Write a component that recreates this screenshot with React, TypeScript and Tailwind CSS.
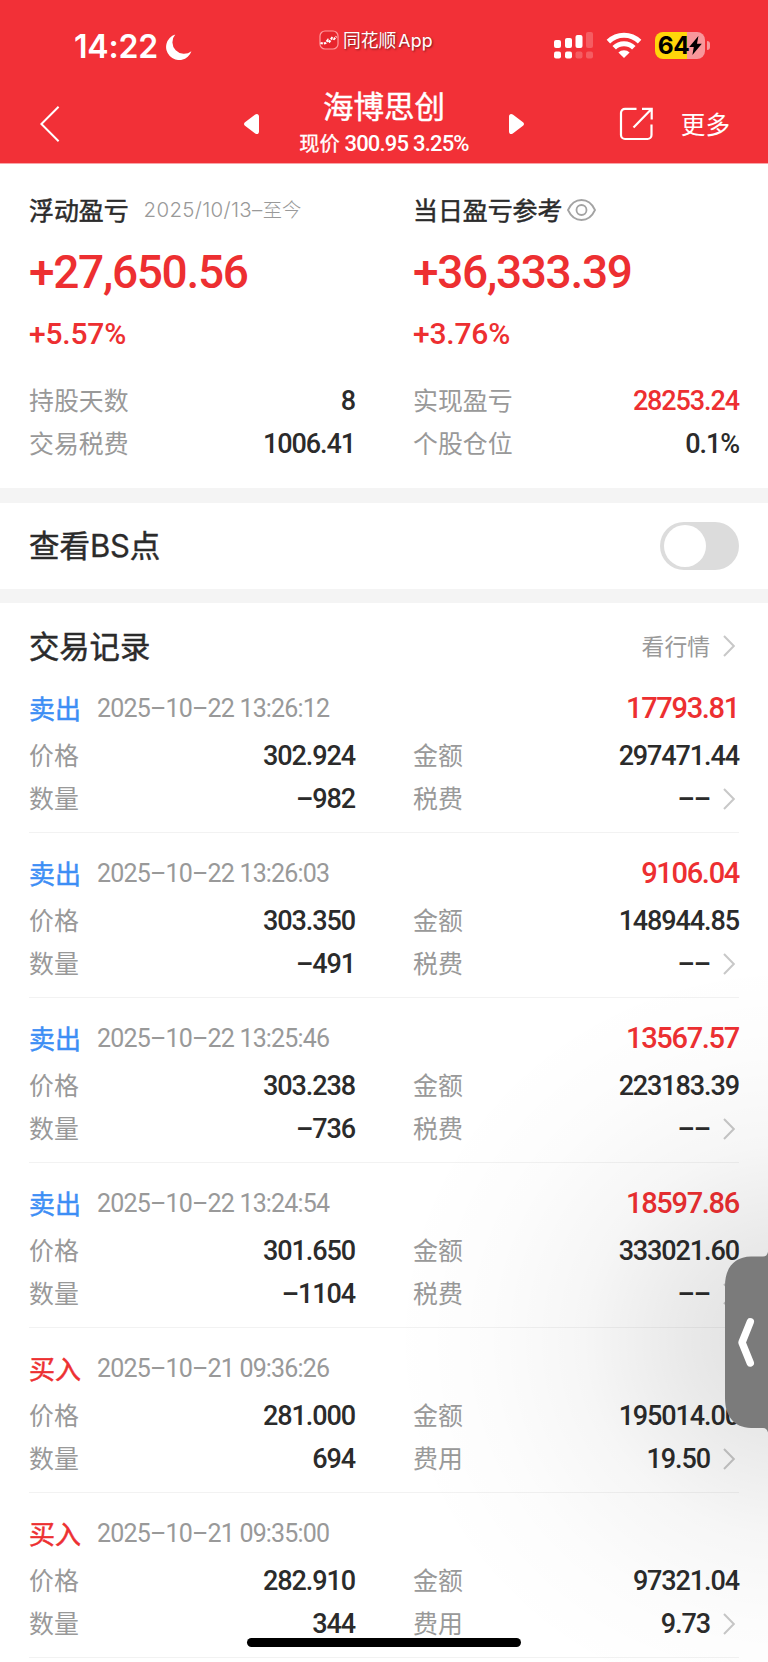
import type { ReactNode } from 'react';

type Trade = {
  side: 'sell' | 'buy';
  time: string;
  profit?: string;
  price: string;
  amount: string;
  quantity: string;
  feeLabel: string;
  fee: string;
};

const trades: Trade[] = [
  { side: 'sell', time: '2025–10–22 13:26:12', profit: '17793.81', price: '302.924', amount: '297471.44', quantity: '–982', feeLabel: '税费', fee: '––' },
  { side: 'sell', time: '2025–10–22 13:26:03', profit: '9106.04', price: '303.350', amount: '148944.85', quantity: '–491', feeLabel: '税费', fee: '––' },
  { side: 'sell', time: '2025–10–22 13:25:46', profit: '13567.57', price: '303.238', amount: '223183.39', quantity: '–736', feeLabel: '税费', fee: '––' },
  { side: 'sell', time: '2025–10–22 13:24:54', profit: '18597.86', price: '301.650', amount: '333021.60', quantity: '–1104', feeLabel: '税费', fee: '––' },
  { side: 'buy', time: '2025–10–21 09:36:26', price: '281.000', amount: '195014.00', quantity: '694', feeLabel: '费用', fee: '19.50' },
  { side: 'buy', time: '2025–10–21 09:35:00', price: '282.910', amount: '97321.04', quantity: '344', feeLabel: '费用', fee: '9.73' },
];

function Label({ children }: { children: ReactNode }) {
  return <span className="-mt-[3px] text-[24.9px] text-[#999]">{children}</span>;
}

function Value({ children, red }: { children: ReactNode; red?: boolean }) {
  return (
    <span className={`font-['Roboto'] text-[27px] font-medium tracking-[-1.1px] ${red ? 'text-[#ed2f31]' : 'text-[#2b2b2b]'}`}>
      {children}
    </span>
  );
}

function Chevron() {
  return (
    <svg className="ml-[13px] mr-[4px] h-[22px] w-[12px] shrink-0" viewBox="0 0 12 22" fill="none" stroke="#c8c8c8" strokeWidth="2">
      <path d="M1 1 10.8 11 1 21" />
    </svg>
  );
}

function StatusBar() {
  return (
    <div className="flex h-[76px] items-start justify-between pl-[74px] pr-[58px] text-white">
      <div className="flex items-center gap-[8px] pt-[27px]">
        <span className="font-['Inter'] text-[32px] font-semibold leading-[40px] tracking-[-0.2px]">14:22</span>
        <svg className="h-[26px] w-[26px]" viewBox="0 0 26 26" fill="currentColor">
          <path d="M9.3.6A13 13 0 1 0 25.4 17.2 11.6 11.6 0 0 1 9.3.6Z" />
        </svg>
      </div>
      <div className="flex items-center gap-[4px] pr-[14px] pt-[27px] pl-[20px]">
        <svg className="h-[20px] w-[20px]" viewBox="0 0 20 20" fill="none">
          <rect x="1" y="1" width="18" height="18" rx="5" fill="#e8252d" stroke="#ff9a9d" strokeWidth="1.2" />
          <path d="M1.5 13 4 13.5 6.5 13 9 10 10.5 11.5 13 8 15 9 17.5 6.5" stroke="#fff" strokeWidth="2.2" strokeDasharray="2.4 1" />
        </svg>
        <span className="text-[17.8px] leading-[24px] [text-shadow:1px_1px_2px_rgba(0,0,0,0.5)]">
          同花顺 <span className="-ml-[2px] font-['Inter'] tracking-[0.2px]">App</span>
        </span>
      </div>
      <div className="flex items-center pt-[31px]">
        <svg className="h-[28px] w-[40px]" viewBox="0 0 40 28" fill="currentColor">
          <rect x="0" y="9" width="7" height="8" rx="2" />
          <rect x="11" y="7" width="7" height="10" rx="2" />
          <rect x="21.5" y="4" width="7" height="13" rx="2" />
          <rect x="32" y="1" width="7" height="16" rx="2" opacity=".22" />
          <rect x="0" y="20.5" width="7" height="7" rx="2" />
          <rect x="11" y="20.5" width="7" height="7" rx="2" />
          <rect x="21.5" y="20.5" width="7" height="7" rx="2" opacity=".22" />
          <rect x="32" y="20.5" width="7" height="7" rx="2" opacity=".22" />
        </svg>
        <svg className="ml-[12px] h-[26px] w-[36px]" viewBox="0 0 36 26" fill="none" stroke="currentColor" strokeWidth="5">
          <path d="M2.4 9.6a22.3 22.3 0 0 1 31.2 0" />
          <path d="M8.2 15.8a14 14 0 0 1 19.6 0" />
          <path d="M18 26 12.4 20.6a7.8 7.8 0 0 1 11.2 0Z" fill="currentColor" stroke="none" />
        </svg>
        <div className="ml-[13px] flex h-[27px] w-[50px] items-center justify-center rounded-[8px] bg-[linear-gradient(90deg,#ffd60a_64%,#f8979b_64%)] text-black">
          <span className="font-['Inter'] text-[24.5px] font-bold leading-[27px] tracking-[-0.6px]">64</span>
          <svg className="h-[19px] w-[13px]" viewBox="0 0 13 19" fill="currentColor">
            <path d="M9.4 0 .2 11h4.6L3.4 19 12.8 7.8H8Z" />
          </svg>
        </div>
        <span className="ml-[2px] h-[9px] w-[3px] rounded-r-full bg-[#f8979b]" />
      </div>
    </div>
  );
}

function NavBar() {
  return (
    <div className="flex h-[87px] items-center pl-[40px] pr-[38px] text-white">
      <svg className="mt-[8px] h-[36px] w-[20px]" viewBox="0 0 20 36" fill="none" stroke="currentColor" strokeWidth="2">
        <path d="M18.6.8 1.4 18l17.2 17.2" />
      </svg>
      <svg className="ml-[184px] mt-[9px] h-[20px] w-[15px]" viewBox="0 0 15 20" fill="currentColor">
        <path d="M1 8.3 11.2.6C13 -.6 15 .2 15 2.6v14.8c0 2.4-2 3.2-3.8 2L1 11.7c-1.3-1-1.3-2.4 0-3.4Z" />
      </svg>
      <div className="mt-[6px] flex w-[250px] flex-col items-center">
        <h1 className="text-[30.5px] leading-[36px] [-webkit-text-stroke:0.4px_white]">海博思创</h1>
        <p className="mt-[5px] whitespace-pre text-[20.3px] leading-[28px]">
          <span className="[-webkit-text-stroke:0.3px_white]">现价</span>
          <span className="font-['Roboto'] text-[22px] font-medium tracking-[-0.8px]"> 300.95 3.25%</span>
        </p>
      </div>
      <svg className="mt-[9px] h-[20px] w-[15px] rotate-180" viewBox="0 0 15 20" fill="currentColor">
        <path d="M1 8.3 11.2.6C13 -.6 15 .2 15 2.6v14.8c0 2.4-2 3.2-3.8 2L1 11.7c-1.3-1-1.3-2.4 0-3.4Z" />
      </svg>
      <svg className="ml-auto mt-[9px] h-[34px] w-[34px]" viewBox="0 0 34 34" fill="none" stroke="currentColor" strokeWidth="2.2">
        <path d="M17.5 1.8H6a4 4 0 0 0-4 4V28a4 4 0 0 0 4 4h22.5a4 4 0 0 0 4-4V17.5" />
        <path d="M23 1.8h9.700V12.500M32 2.5 14.5 20.5" />
      </svg>
      <span className="ml-[28px] mt-[7px] text-[24.6px] leading-[36px]">更多</span>
    </div>
  );
}

type SummaryColumnProps = {
  heading: ReactNode;
  total: string;
  percent: string;
  rows: { label: string; value: string; red?: boolean }[];
};

function SummaryColumn({ heading, total, percent, rows }: SummaryColumnProps) {
  return (
    <div className="px-[29px] pt-[28px]">
      <div className="flex h-[36px] items-center">{heading}</div>
      <div className="mt-[14px] flex h-[60px] items-center font-['Roboto'] text-[46px] font-medium tracking-[-1.3px] text-[#ed2f31]">{total}</div>
      <div className="mt-[11px] flex h-[40px] items-center font-['Roboto'] text-[30px] font-medium tracking-[-0.2px] text-[#ed2f31]">{percent}</div>
      <div className="mt-[27px]">
        {rows.map((row) => (
          <div key={row.label} className="flex h-[43px] items-center justify-between">
            <Label>{row.label}</Label>
            <Value red={row.red}>{row.value}</Value>
          </div>
        ))}
      </div>
    </div>
  );
}

function Summary() {
  return (
    <section className="grid h-[324px] grid-cols-2 text-[#2b2b2b]">
      <SummaryColumn
        heading={
          <>
            <span className="text-[24.9px] [-webkit-text-stroke:0.5px_#2b2b2b]">浮动盈亏</span>
            <span className="ml-[15px] text-[19.3px] font-light text-[#999]">
              <span className="font-['Inter'] text-[20.5px] tracking-[0.3px]">2025/10/13–</span>至今
            </span>
          </>
        }
        total="+27,650.56"
        percent="+5.57%"
        rows={[
          { label: '持股天数', value: '8' },
          { label: '交易税费', value: '1006.41' },
        ]}
      />
      <SummaryColumn
        heading={
          <>
            <span className="text-[24.9px] [-webkit-text-stroke:0.5px_#2b2b2b]">当日盈亏参考</span>
            <svg className="ml-[5px] h-[22px] w-[29px]" viewBox="0 0 29 22" fill="none" stroke="#a3a3a3" strokeWidth="1.8">
              <path d="M1 11C4 4.5 9 1 14.5 1S25 4.5 28 11c-3 6.5-8 10-13.5 10S4 17.5 1 11Z" />
              <circle cx="14.5" cy="11" r="5" />
            </svg>
          </>
        }
        total="+36,333.39"
        percent="+3.76%"
        rows={[
          { label: '实现盈亏', value: '28253.24', red: true },
          { label: '个股仓位', value: '0.1%' },
        ]}
      />
    </section>
  );
}

function TradeRow({ trade }: { trade: Trade }) {
  const sell = trade.side === 'sell';
  return (
    <li className="mx-[29px] h-[165px] border-b border-[#f2f2f2] pt-[20px]">
      <div className="flex h-[42px] items-center">
        <span className={`-mt-[4px] text-[26px] ${sell ? 'text-[#3d8ef5] [-webkit-text-stroke:0.5px_#3d8ef5]' : 'text-[#ed2f31] [-webkit-text-stroke:0.5px_#ed2f31]'}`}>
          {sell ? '卖出' : '买入'}
        </span>
        <span className="ml-[16px] font-['Roboto'] text-[25px] tracking-[-0.82px] text-[#999]">{trade.time}</span>
        <span className="ml-auto font-['Roboto'] text-[29px] font-medium tracking-[-1.3px] text-[#ed2f31]">{trade.profit}</span>
      </div>
      <div className="mt-[5px] grid grid-cols-2 gap-x-[58px]">
        <div className="flex h-[43px] items-center justify-between">
          <Label>价格</Label>
          <Value>{trade.price}</Value>
        </div>
        <div className="flex h-[43px] items-center justify-between">
          <Label>金额</Label>
          <Value>{trade.amount}</Value>
        </div>
        <div className="flex h-[42px] items-center justify-between">
          <Label>数量</Label>
          <Value>{trade.quantity}</Value>
        </div>
        <div className="flex h-[42px] items-center">
          <Label>{trade.feeLabel}</Label>
          <span className="ml-auto">
            <Value>{trade.fee}</Value>
          </span>
          <Chevron />
        </div>
      </div>
    </li>
  );
}

export default function App() {
  return (
    <div className="relative h-[1662px] w-[768px] overflow-hidden bg-white font-['Noto_Sans_CJK_SC',sans-serif]">
      <header className="h-[164px] border-b border-[#f9a5a8] bg-[#f23037]">
        <StatusBar />
        <NavBar />
      </header>
      <Summary />
      <div className="h-[15px] bg-[#f4f4f4]" />
      <section className="flex h-[86px] items-center justify-between px-[29px]">
        <span className="text-[30.5px] text-[#2b2b2b] [-webkit-text-stroke:0.5px_#2b2b2b]">
          查看<span className="font-['Inter'] text-[31px] tracking-[-0.2px] [-webkit-text-stroke:0.3px_#2b2b2b]">BS</span>点
        </span>
        <div className="flex h-[48px] w-[79px] items-center rounded-full bg-[#dcdcdc] pl-[4px]">
          <div className="size-[42px] rounded-full bg-white" />
        </div>
      </section>
      <div className="h-[14px] bg-[#f4f4f4]" />
      <section>
        <div className="flex h-[65px] items-center px-[29px] pt-[21px]">
          <h2 className="-mt-[2px] text-[30.3px] leading-[44px] text-[#2b2b2b] [-webkit-text-stroke:0.5px_#2b2b2b]">交易记录</h2>
          <span className="ml-auto text-[22.8px] leading-[44px] text-[#999]">看行情</span>
          <Chevron />
        </div>
        <ul>
          {trades.map((trade) => (
            <TradeRow key={trade.time} trade={trade} />
          ))}
        </ul>
      </section>

      <div className="pointer-events-none absolute inset-0 bg-[radial-gradient(ellipse_400px_380px_at_790px_1340px,rgba(0,0,0,0.13)_0%,rgba(0,0,0,0.085)_26%,rgba(0,0,0,0.035)_52%,rgba(0,0,0,0.012)_76%,transparent_100%)]" />
      <svg className="absolute left-[725px] top-[1250px] h-[186px] w-[43px]" viewBox="0 0 43 186" fill="none">
        <path d="M43 2c-1 3-2 4.500-5 4.500H26C9 7 0 18 0 36v112c0 18 9 29.500 26 30h12c3 0 4 1.500 5 4.500Z" fill="#7b7b7b" />
        <path d="M25.3 71.800 17 92.500 25.3 113" stroke="#fff" strokeWidth="7.4" strokeLinecap="round" strokeLinejoin="round" />
      </svg>
      <div className="absolute left-[247px] top-[1638px] h-[9px] w-[274px] rounded-full bg-black" />
    </div>
  );
}
